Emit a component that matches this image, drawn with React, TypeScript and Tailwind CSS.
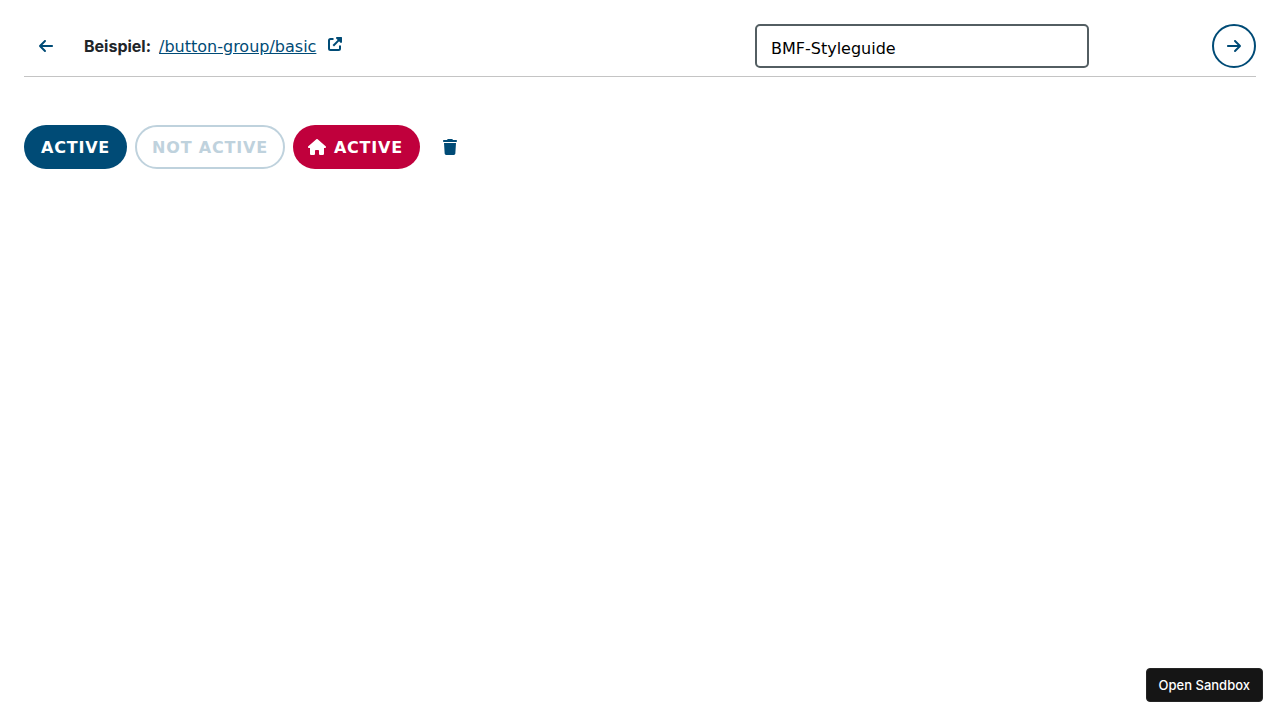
import { FaArrowLeft, FaArrowRight, FaHouse, FaTrash } from "react-icons/fa6";

function ExternalLinkIcon() {
  return (
    <svg viewBox="0 0 14 14" className="mb-1 size-3.5" fill="none" stroke="currentColor" strokeWidth="2" aria-hidden="true">
      <path d="M5.5 2h-3A1.5 1.5 0 0 0 1 3.5v8A1.5 1.5 0 0 0 2.5 13h8a1.5 1.5 0 0 0 1.5-1.5v-3" />
      <path d="M5.3 8.7 12.6 1.4" />
      <path d="M8.4 0h5a.6.6 0 0 1 .6.6v5l-1.2.5L7.9 1.2z" fill="currentColor" stroke="none" />
    </svg>
  );
}

function Header() {
  return (
    <header className="flex items-center border-b border-[#c4c4c4] pb-2">
      <button type="button" aria-label="Vorheriges Beispiel" className="flex size-11 shrink-0 items-center justify-center rounded-full text-[#004b76]">
        <FaArrowLeft className="size-4" />
      </button>
      <div className="ml-4 flex min-w-0 flex-1 items-center gap-2">
        <span className="font-[Inter,sans-serif] font-bold text-[#212529]">Beispiel:</span>
        <a href="#/button-group/basic" className="flex items-center gap-3 text-[#004b76]">
          <span className="pt-0.5 underline">/button-group/basic</span>
          <ExternalLinkIcon />
        </a>
      </div>
      <input
        type="text"
        aria-label="Styleguide"
        defaultValue="BMF-Styleguide"
        className="h-11 w-[334px] rounded-[5px] border-2 border-[#535e62] bg-white px-3.5 pt-1 text-base text-black"
      />
      <div className="flex w-[167px] shrink-0 justify-end">
        <button type="button" aria-label="Nächstes Beispiel" className="flex size-11 items-center justify-center rounded-full border-2 border-[#004b76] text-[#004b76]">
          <FaArrowRight className="size-4" />
        </button>
      </div>
    </header>
  );
}

export default function App() {
  return (
    <div className="flex min-h-screen flex-col bg-white p-6 pb-[18px] font-['DejaVu_Sans',sans-serif] text-base">
      <Header />
      <main className="mt-12 flex-1">
        <div role="group" aria-label="Aktionen" className="flex flex-wrap gap-2">
          <button type="button" className="h-11 rounded-full bg-[#004b76] px-[17px] pt-0.5 font-bold tracking-wider text-white">
            ACTIVE
          </button>
          <button type="button" disabled className="h-11 rounded-full border-2 border-[#bfd2dd] px-[15px] pt-0.5 font-bold tracking-wider text-[#bfd2dd]">
            NOT ACTIVE
          </button>
          <button type="button" className="flex h-11 items-center gap-2 rounded-full bg-[#c0003c] pr-[17px] pl-[15px] font-bold tracking-wider text-white">
            <FaHouse className="h-4 w-[18px]" />
            <span className="pt-0.5">ACTIVE</span>
          </button>
          <button type="button" aria-label="Löschen" className="flex size-11 items-center justify-center rounded-full text-[#004b76]">
            <FaTrash className="size-4" />
          </button>
        </div>
      </main>
      <footer className="-mr-[7px] flex justify-end">
        <button type="button" className="h-[34px] rounded border border-[#252525] bg-[#151515] px-3 pt-0.5 font-[Inter,sans-serif] text-[13px] font-medium text-white">
          Open Sandbox
        </button>
      </footer>
    </div>
  );
}
